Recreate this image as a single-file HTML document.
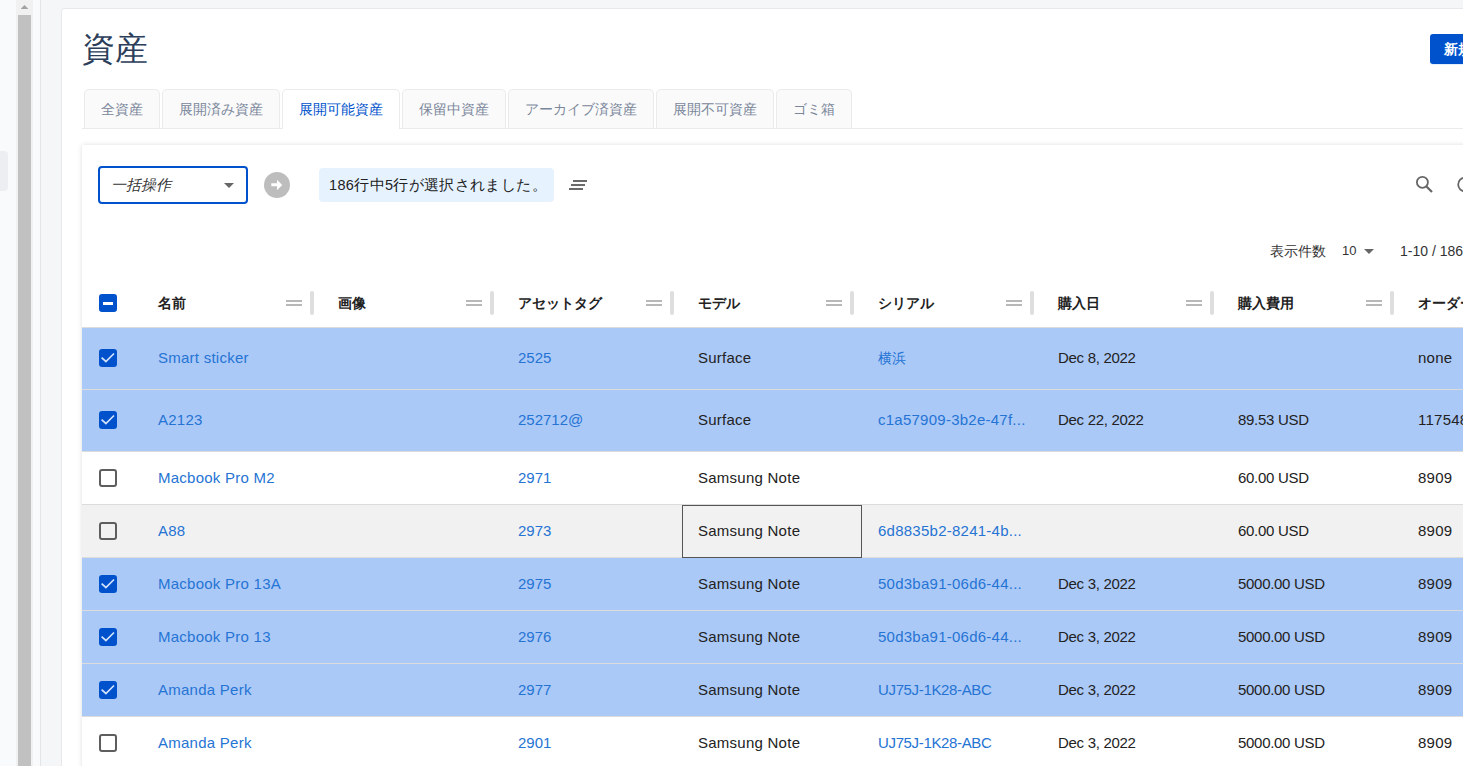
<!DOCTYPE html>
<html lang="ja"><head><meta charset="utf-8">
<style>
*{box-sizing:border-box;margin:0;padding:0}
html,body{width:1463px;height:766px;overflow:hidden}
body{position:relative;background:#f5f6f8;font-family:"Liberation Sans",sans-serif;color:#222}
.abs{position:absolute}
#side{left:0;top:0;width:40px;height:766px;background:#f9fafb}
#sidepill{left:0;top:151px;width:8px;height:40px;background:#eceef1;border-radius:0 4px 4px 0}
#track{left:16px;top:0;width:17px;height:766px;background:#f1f1f1}
#thumb{left:18px;top:15px;width:13px;height:751px;background:#c1c1c1}
#uparr{left:20px;top:5px;width:0;height:0;border-left:4px solid transparent;border-right:4px solid transparent;border-bottom:4px solid #a3a3a3}
#vline{left:40px;top:0;width:1px;height:766px;background:#e2e4e8}
#card{left:61px;top:8px;width:1500px;height:900px;background:#fff;border:1px solid #e6e8eb;border-radius:3px}
#title{left:82px;top:29px;font-size:33px;color:#2c3e5a;line-height:40px}
#newbtn{left:1430px;top:34px;width:80px;height:30px;background:#0052cc;border-radius:3px;color:#fff;font-size:14px;font-weight:bold;line-height:31px;padding-left:14px;box-shadow:0 1px 0 #e3f0fc}
.tab{position:absolute;top:89px;height:39px;background:#fafafa;border:1px solid #ebebeb;border-bottom:none;border-radius:5px 5px 0 0;font-size:14px;color:#7a879b;text-align:center;line-height:38px}
.tab.act{background:#fff;color:#0052cc;height:40px}
#tabline{left:82px;top:128px;width:1400px;height:1px;background:#ebebeb}
#panel{left:82px;top:145px;width:1400px;height:700px;background:#fff;box-shadow:0 0 5px rgba(0,0,0,.13)}

#sel{left:98px;top:166px;width:150px;height:38px;border:2px solid #0052cc;border-radius:4px;background:#fff}
#seltxt{left:111px;top:176px;font-size:15px;font-style:italic;color:#333;line-height:18px}
#seltri{left:224px;top:183px;width:0;height:0;border-left:5px solid transparent;border-right:5px solid transparent;border-top:5px solid #666}
#go{left:263px;top:171px;width:27px;height:27px;border-radius:50%;background:#bdbdbd}
#info{left:319px;top:168px;width:235px;height:34px;background:#e6f3ff;border-radius:4px;font-size:14.5px;letter-spacing:0.35px;color:#222;line-height:34px;padding-left:10px;white-space:nowrap}
#pag{left:1270px;top:243px;font-size:14px;color:#333;white-space:nowrap;line-height:16px}
.hd{position:absolute;top:294px;font-size:14px;font-weight:bold;color:#222;line-height:18px;white-space:nowrap}
.hdl{position:absolute;width:16px;height:2px;background:#b8b8b8}
.rsz{position:absolute;top:291px;width:4px;height:24px;background:#dedede;border-radius:2px}
.row{position:absolute;left:82px;width:1400px}
.cb{position:absolute;left:17px;width:18px;height:18px;border-radius:3px}
.cb.on{background:#0052cc}
.cb.off{border:2px solid #5e5e5e;background:transparent}
.c{position:absolute;font-size:15px;line-height:18px;white-space:nowrap;color:#222}
.lk{color:#2574d4}
.al{letter-spacing:0.25px}
.nm{letter-spacing:-0.3px}
</style></head><body>
<div class="abs" id="side"></div>
<div class="abs" id="sidepill"></div>
<div class="abs" id="track"></div>
<div class="abs" id="thumb"></div>
<svg class="abs" style="left:16px;top:0" width="17" height="15" viewBox="0 0 17 15"><path d="M4.6 9.1h7.8L8.5 4.9z" fill="#a3a3a3"/></svg>
<div class="abs" id="vline"></div>
<div class="abs" id="card"></div>
<div class="abs" id="title">資産</div>
<div class="abs" id="newbtn">新規</div>
<div class="abs" id="tabline"></div>
<div class="tab" style="left:84px;width:76px">全資産</div>
<div class="tab" style="left:162px;width:118px">展開済み資産</div>
<div class="tab act" style="left:282px;width:118px">展開可能資産</div>
<div class="tab" style="left:402px;width:104px">保留中資産</div>
<div class="tab" style="left:508px;width:146px">アーカイブ済資産</div>
<div class="tab" style="left:656px;width:118px">展開不可資産</div>
<div class="tab" style="left:776px;width:76px">ゴミ箱</div>
<div class="abs" id="panel"></div>

<div class="abs" id="sel"></div>
<div class="abs" id="seltxt">一括操作</div>
<div class="abs" id="seltri"></div>
<svg class="abs" style="left:260px;top:168px" width="34" height="34" viewBox="0 0 34 34"><circle cx="17" cy="17" r="13" fill="#bdbdbd"/><path d="M11.3 15.3h6v3h-6z M17 11.8L22.2 17 17 22.2z" fill="#fff"/></svg>
<div class="abs" id="info">186行中5行が選択されました。</div>
<svg class="abs" style="left:566px;top:176px" width="24" height="18" viewBox="0 0 24 18"><path d="M7 5h14M5 9h14M3 13h14" stroke="#6b6b6b" stroke-width="2"/></svg>
<svg class="abs" style="left:1410px;top:170px" width="30" height="30" viewBox="0 0 30 30"><circle cx="12.4" cy="12.3" r="5.5" stroke="#666" stroke-width="1.8" fill="none"/><path d="M16.5 16.5l5.5 5.5" stroke="#666" stroke-width="2.2"/></svg>
<svg class="abs" style="left:1450px;top:170px" width="20" height="30" viewBox="0 0 20 30"><circle cx="15" cy="14.5" r="6.8" stroke="#666" stroke-width="1.8" fill="none"/></svg>
<div class="abs" id="pag">表示件数<span style="position:absolute;left:72px;top:0;font-size:13px">10</span><span style="position:absolute;left:94px;top:6px;width:0;height:0;border-left:5px solid transparent;border-right:5px solid transparent;border-top:5px solid #666"></span><span style="position:absolute;left:130px;top:0">1-10 / 186</span></div>
<div class="abs" style="left:82px;top:327px;width:1400px;height:1px;background:#dcdcdc"></div>
<div class="abs" style="left:99px;top:294px;width:18px;height:18px;background:#0052cc;border-radius:3px"><div style="position:absolute;left:4px;top:8px;width:10px;height:3px;background:#fff"></div></div>
<div class="hd" style="left:158px">名前</div>
<div class="hdl" style="left:286px;top:300px"></div><div class="hdl" style="left:286px;top:304px"></div><div class="rsz" style="left:310px"></div>
<div class="hd" style="left:338px">画像</div>
<div class="hdl" style="left:466px;top:300px"></div><div class="hdl" style="left:466px;top:304px"></div><div class="rsz" style="left:490px"></div>
<div class="hd" style="left:518px">アセットタグ</div>
<div class="hdl" style="left:646px;top:300px"></div><div class="hdl" style="left:646px;top:304px"></div><div class="rsz" style="left:670px"></div>
<div class="hd" style="left:698px">モデル</div>
<div class="hdl" style="left:826px;top:300px"></div><div class="hdl" style="left:826px;top:304px"></div><div class="rsz" style="left:850px"></div>
<div class="hd" style="left:878px">シリアル</div>
<div class="hdl" style="left:1006px;top:300px"></div><div class="hdl" style="left:1006px;top:304px"></div><div class="rsz" style="left:1030px"></div>
<div class="hd" style="left:1058px">購入日</div>
<div class="hdl" style="left:1186px;top:300px"></div><div class="hdl" style="left:1186px;top:304px"></div><div class="rsz" style="left:1210px"></div>
<div class="hd" style="left:1238px">購入費用</div>
<div class="hdl" style="left:1366px;top:300px"></div><div class="hdl" style="left:1366px;top:304px"></div><div class="rsz" style="left:1390px"></div>
<div class="hd" style="left:1418px">オーダー番号</div>
<div class="row" style="top:328px;height:62px;background:#abc9f7;border-bottom:1px solid #dcdcdc"><div class="cb on" style="top:21px"><svg width="18" height="18" viewBox="0 0 18 18" style="position:absolute;left:0;top:0"><path d="M2.6 8.6l4.3 3.9L15 4.5" stroke="#d3e2fb" stroke-width="1.7" fill="none"/></svg></div><div class="c lk al" style="left:76px;top:21px">Smart sticker</div><div class="c lk" style="left:436px;top:21px">2525</div><div class="c al" style="left:616px;top:21px">Surface</div><div class="c lk" style="left:796px;top:21px;font-size:14px">横浜</div><div class="c nm" style="left:976px;top:21px">Dec 8, 2022</div><div class="c al" style="left:1336px;top:21px">none</div></div>
<div class="row" style="top:390px;height:62px;background:#abc9f7;border-bottom:1px solid #dcdcdc"><div class="cb on" style="top:21px"><svg width="18" height="18" viewBox="0 0 18 18" style="position:absolute;left:0;top:0"><path d="M2.6 8.6l4.3 3.9L15 4.5" stroke="#d3e2fb" stroke-width="1.7" fill="none"/></svg></div><div class="c lk al" style="left:76px;top:21px">A2123</div><div class="c lk" style="left:436px;top:21px">252712@</div><div class="c al" style="left:616px;top:21px">Surface</div><div class="c lk" style="left:796px;top:21px;letter-spacing:0.25px">c1a57909-3b2e-47f...</div><div class="c nm" style="left:976px;top:21px">Dec 22, 2022</div><div class="c nm" style="left:1156px;top:21px">89.53 USD</div><div class="c al" style="left:1336px;top:21px">117548</div></div>
<div class="row" style="top:452px;height:53px;background:#ffffff;border-bottom:1px solid #dcdcdc"><div class="cb off" style="top:17px"></div><div class="c lk al" style="left:76px;top:17px">Macbook Pro M2</div><div class="c lk" style="left:436px;top:17px">2971</div><div class="c al" style="left:616px;top:17px">Samsung Note</div><div class="c nm" style="left:1156px;top:17px">60.00 USD</div><div class="c al" style="left:1336px;top:17px">8909</div></div>
<div class="row" style="top:505px;height:53px;background:#f1f1f1;border-bottom:1px solid #dcdcdc"><div class="cb off" style="top:17px"></div><div class="c lk al" style="left:76px;top:17px">A88</div><div class="c lk" style="left:436px;top:17px">2973</div><div class="c al" style="left:616px;top:17px">Samsung Note</div><div class="c lk" style="left:796px;top:17px;letter-spacing:0.25px">6d8835b2-8241-4b...</div><div class="c nm" style="left:1156px;top:17px">60.00 USD</div><div class="c al" style="left:1336px;top:17px">8909</div></div>
<div class="row" style="top:558px;height:53px;background:#abc9f7;border-bottom:1px solid #dcdcdc"><div class="cb on" style="top:17px"><svg width="18" height="18" viewBox="0 0 18 18" style="position:absolute;left:0;top:0"><path d="M2.6 8.6l4.3 3.9L15 4.5" stroke="#d3e2fb" stroke-width="1.7" fill="none"/></svg></div><div class="c lk al" style="left:76px;top:17px">Macbook Pro 13A</div><div class="c lk" style="left:436px;top:17px">2975</div><div class="c al" style="left:616px;top:17px">Samsung Note</div><div class="c lk" style="left:796px;top:17px;letter-spacing:0.25px">50d3ba91-06d6-44...</div><div class="c nm" style="left:976px;top:17px">Dec 3, 2022</div><div class="c nm" style="left:1156px;top:17px">5000.00 USD</div><div class="c al" style="left:1336px;top:17px">8909</div></div>
<div class="row" style="top:611px;height:53px;background:#abc9f7;border-bottom:1px solid #dcdcdc"><div class="cb on" style="top:17px"><svg width="18" height="18" viewBox="0 0 18 18" style="position:absolute;left:0;top:0"><path d="M2.6 8.6l4.3 3.9L15 4.5" stroke="#d3e2fb" stroke-width="1.7" fill="none"/></svg></div><div class="c lk al" style="left:76px;top:17px">Macbook Pro 13</div><div class="c lk" style="left:436px;top:17px">2976</div><div class="c al" style="left:616px;top:17px">Samsung Note</div><div class="c lk" style="left:796px;top:17px;letter-spacing:0.25px">50d3ba91-06d6-44...</div><div class="c nm" style="left:976px;top:17px">Dec 3, 2022</div><div class="c nm" style="left:1156px;top:17px">5000.00 USD</div><div class="c al" style="left:1336px;top:17px">8909</div></div>
<div class="row" style="top:664px;height:53px;background:#abc9f7;border-bottom:1px solid #dcdcdc"><div class="cb on" style="top:17px"><svg width="18" height="18" viewBox="0 0 18 18" style="position:absolute;left:0;top:0"><path d="M2.6 8.6l4.3 3.9L15 4.5" stroke="#d3e2fb" stroke-width="1.7" fill="none"/></svg></div><div class="c lk al" style="left:76px;top:17px">Amanda Perk</div><div class="c lk" style="left:436px;top:17px">2977</div><div class="c al" style="left:616px;top:17px">Samsung Note</div><div class="c lk" style="left:796px;top:17px;letter-spacing:-0.35px">UJ75J-1K28-ABC</div><div class="c nm" style="left:976px;top:17px">Dec 3, 2022</div><div class="c nm" style="left:1156px;top:17px">5000.00 USD</div><div class="c al" style="left:1336px;top:17px">8909</div></div>
<div class="row" style="top:717px;height:53px;background:#ffffff;border-bottom:1px solid #dcdcdc"><div class="cb off" style="top:17px"></div><div class="c lk al" style="left:76px;top:17px">Amanda Perk</div><div class="c lk" style="left:436px;top:17px">2901</div><div class="c al" style="left:616px;top:17px">Samsung Note</div><div class="c lk" style="left:796px;top:17px;letter-spacing:-0.35px">UJ75J-1K28-ABC</div><div class="c nm" style="left:976px;top:17px">Dec 3, 2022</div><div class="c nm" style="left:1156px;top:17px">5000.00 USD</div><div class="c al" style="left:1336px;top:17px">8909</div></div>
<div class="abs" style="left:682px;top:505px;width:180px;height:53px;border:1px solid #555"></div>
</body></html>
